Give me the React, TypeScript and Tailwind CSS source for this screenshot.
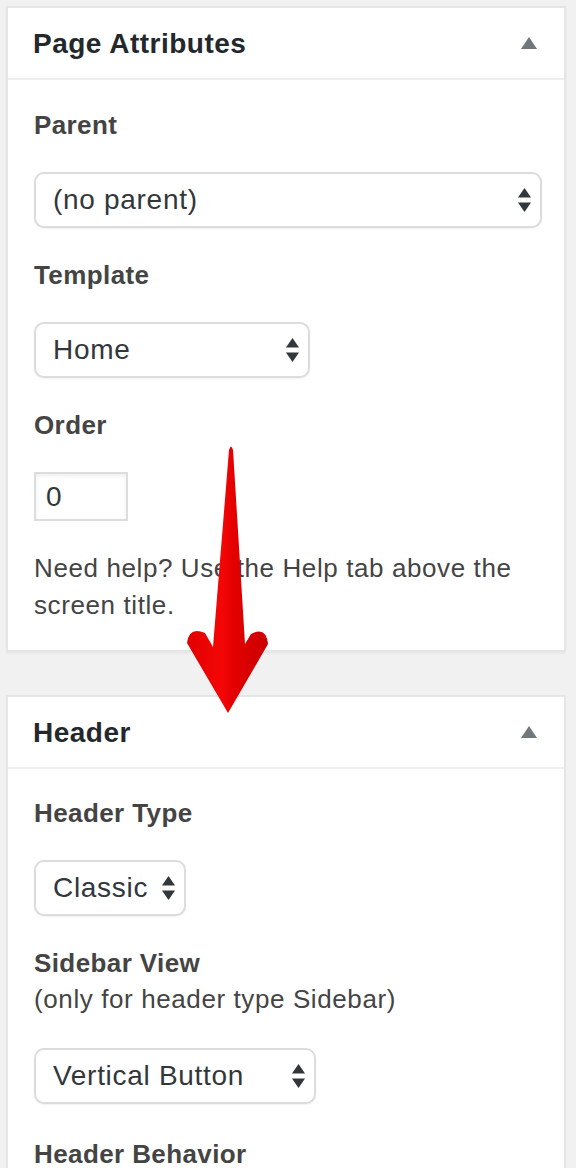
import React from "react";

function SelectArrows() {
  return (
    <svg width="13" height="24" viewBox="0 0 13 24" className="shrink-0">
      <path d="M6.5 0 L13 9.5 L0 9.5 Z" fill="#32373c" />
      <path d="M0 14.5 L13 14.5 L6.5 24 Z" fill="#32373c" />
    </svg>
  );
}

function Select({ value, width }: { value: string; width: string }) {
  return (
    <div
      className={`flex items-center justify-between h-[56px] ${width} border-2 border-[#dcdcdc] rounded-[10px] bg-white pl-[17px] pr-[9px] text-[28px] tracking-[0.7px] text-[#32373c] shadow-[0_1px_2px_rgba(0,0,0,0.06)]`}
    >
      <span className="leading-none">{value}</span>
      <SelectArrows />
    </div>
  );
}

function Toggle() {
  return (
    <svg width="16" height="12" viewBox="0 0 16 12">
      <path d="M8 0 L16 12 L0 12 Z" fill="#72777c" />
    </svg>
  );
}

function PanelHeader({ title }: { title: string }) {
  return (
    <div className="flex items-center justify-between h-[72px] border-b-2 border-[#eeeeee] pl-[25px] pr-[27px]">
      <h2 className="pt-[2px] text-[28px] font-bold tracking-[0.5px] text-[#23282d] leading-none">{title}</h2>
      <Toggle />
    </div>
  );
}

function Label({ children, className = "" }: { children: React.ReactNode; className?: string }) {
  return (
    <div className={`h-[36px] leading-[36px] text-[26px] font-bold tracking-[0.4px] text-[#444444] ${className}`}>
      {children}
    </div>
  );
}

export default function App() {
  return (
    <div className="relative w-[576px] h-[1168px] overflow-hidden bg-[#f1f1f1] font-['Liberation_Sans',Arial,sans-serif]">
      <div className="pt-[6px] pl-[6px]">
        {/* Page Attributes */}
        <div className="w-[560px] bg-white border-2 border-[#e5e5e5] shadow-[0_2px_2px_rgba(0,0,0,0.04)]">
          <PanelHeader title="Page Attributes" />
          <div className="pl-[26px] pt-[27px] pb-[26px]">
            <Label>Parent</Label>
            <div className="mt-[29px]">
              <Select value="(no parent)" width="w-[508px]" />
            </div>
            <Label className="mt-[29px]">Template</Label>
            <div className="mt-[29px]">
              <Select value="Home" width="w-[276px]" />
            </div>
            <Label className="mt-[29px]">Order</Label>
            <div className="mt-[29px] flex items-center h-[49px] w-[94px] border-2 border-[#dddddd] bg-white pl-[10px] text-[28px] text-[#32373c] shadow-[inset_0_2px_4px_rgba(0,0,0,0.07)]">
              0
            </div>
            <p className="mt-[29px] text-[26px] leading-[37px] tracking-[0.6px] text-[#444444]">
              Need help? Use the Help tab above the
              <br />
              screen title.
            </p>
          </div>
        </div>

        {/* Header */}
        <div className="mt-[43px] w-[560px] h-[600px] bg-white border-2 border-[#e5e5e5]">
          <PanelHeader title="Header" />
          <div className="pl-[26px] pt-[26px]">
            <Label>Header Type</Label>
            <div className="mt-[29px]">
              <Select value="Classic" width="w-[152px]" />
            </div>
            <Label className="mt-[29px]">Sidebar View</Label>
            <div className="h-[36px] leading-[36px] text-[26px] tracking-[0.6px] text-[#444444]">
              (only for header type Sidebar)
            </div>
            <div className="mt-[31px]">
              <Select value="Vertical Button" width="w-[282px]" />
            </div>
            <Label className="mt-[32px]">Header Behavior</Label>
          </div>
        </div>
      </div>

      {/* Red arrow overlay */}
      <svg
        className="absolute left-0 top-0 pointer-events-none"
        width="576"
        height="1168"
        viewBox="0 0 576 1168"
      >
        <defs>
          <linearGradient id="redg" gradientUnits="userSpaceOnUse" x1="188" y1="0" x2="270" y2="0">
            <stop offset="0" stopColor="#e20000" />
            <stop offset="0.42" stopColor="#f40606" />
            <stop offset="0.55" stopColor="#e40000" />
            <stop offset="1" stopColor="#c80000" />
          </linearGradient>
        </defs>
        <path
          d="M229 450 Q231 443 233 450 L245 644 L251 634 Q266 626 268 644 L228 713 L187 643 Q189 626 205 633 L213 647 Z"
          fill="url(#redg)"
        />
      </svg>
    </div>
  );
}
